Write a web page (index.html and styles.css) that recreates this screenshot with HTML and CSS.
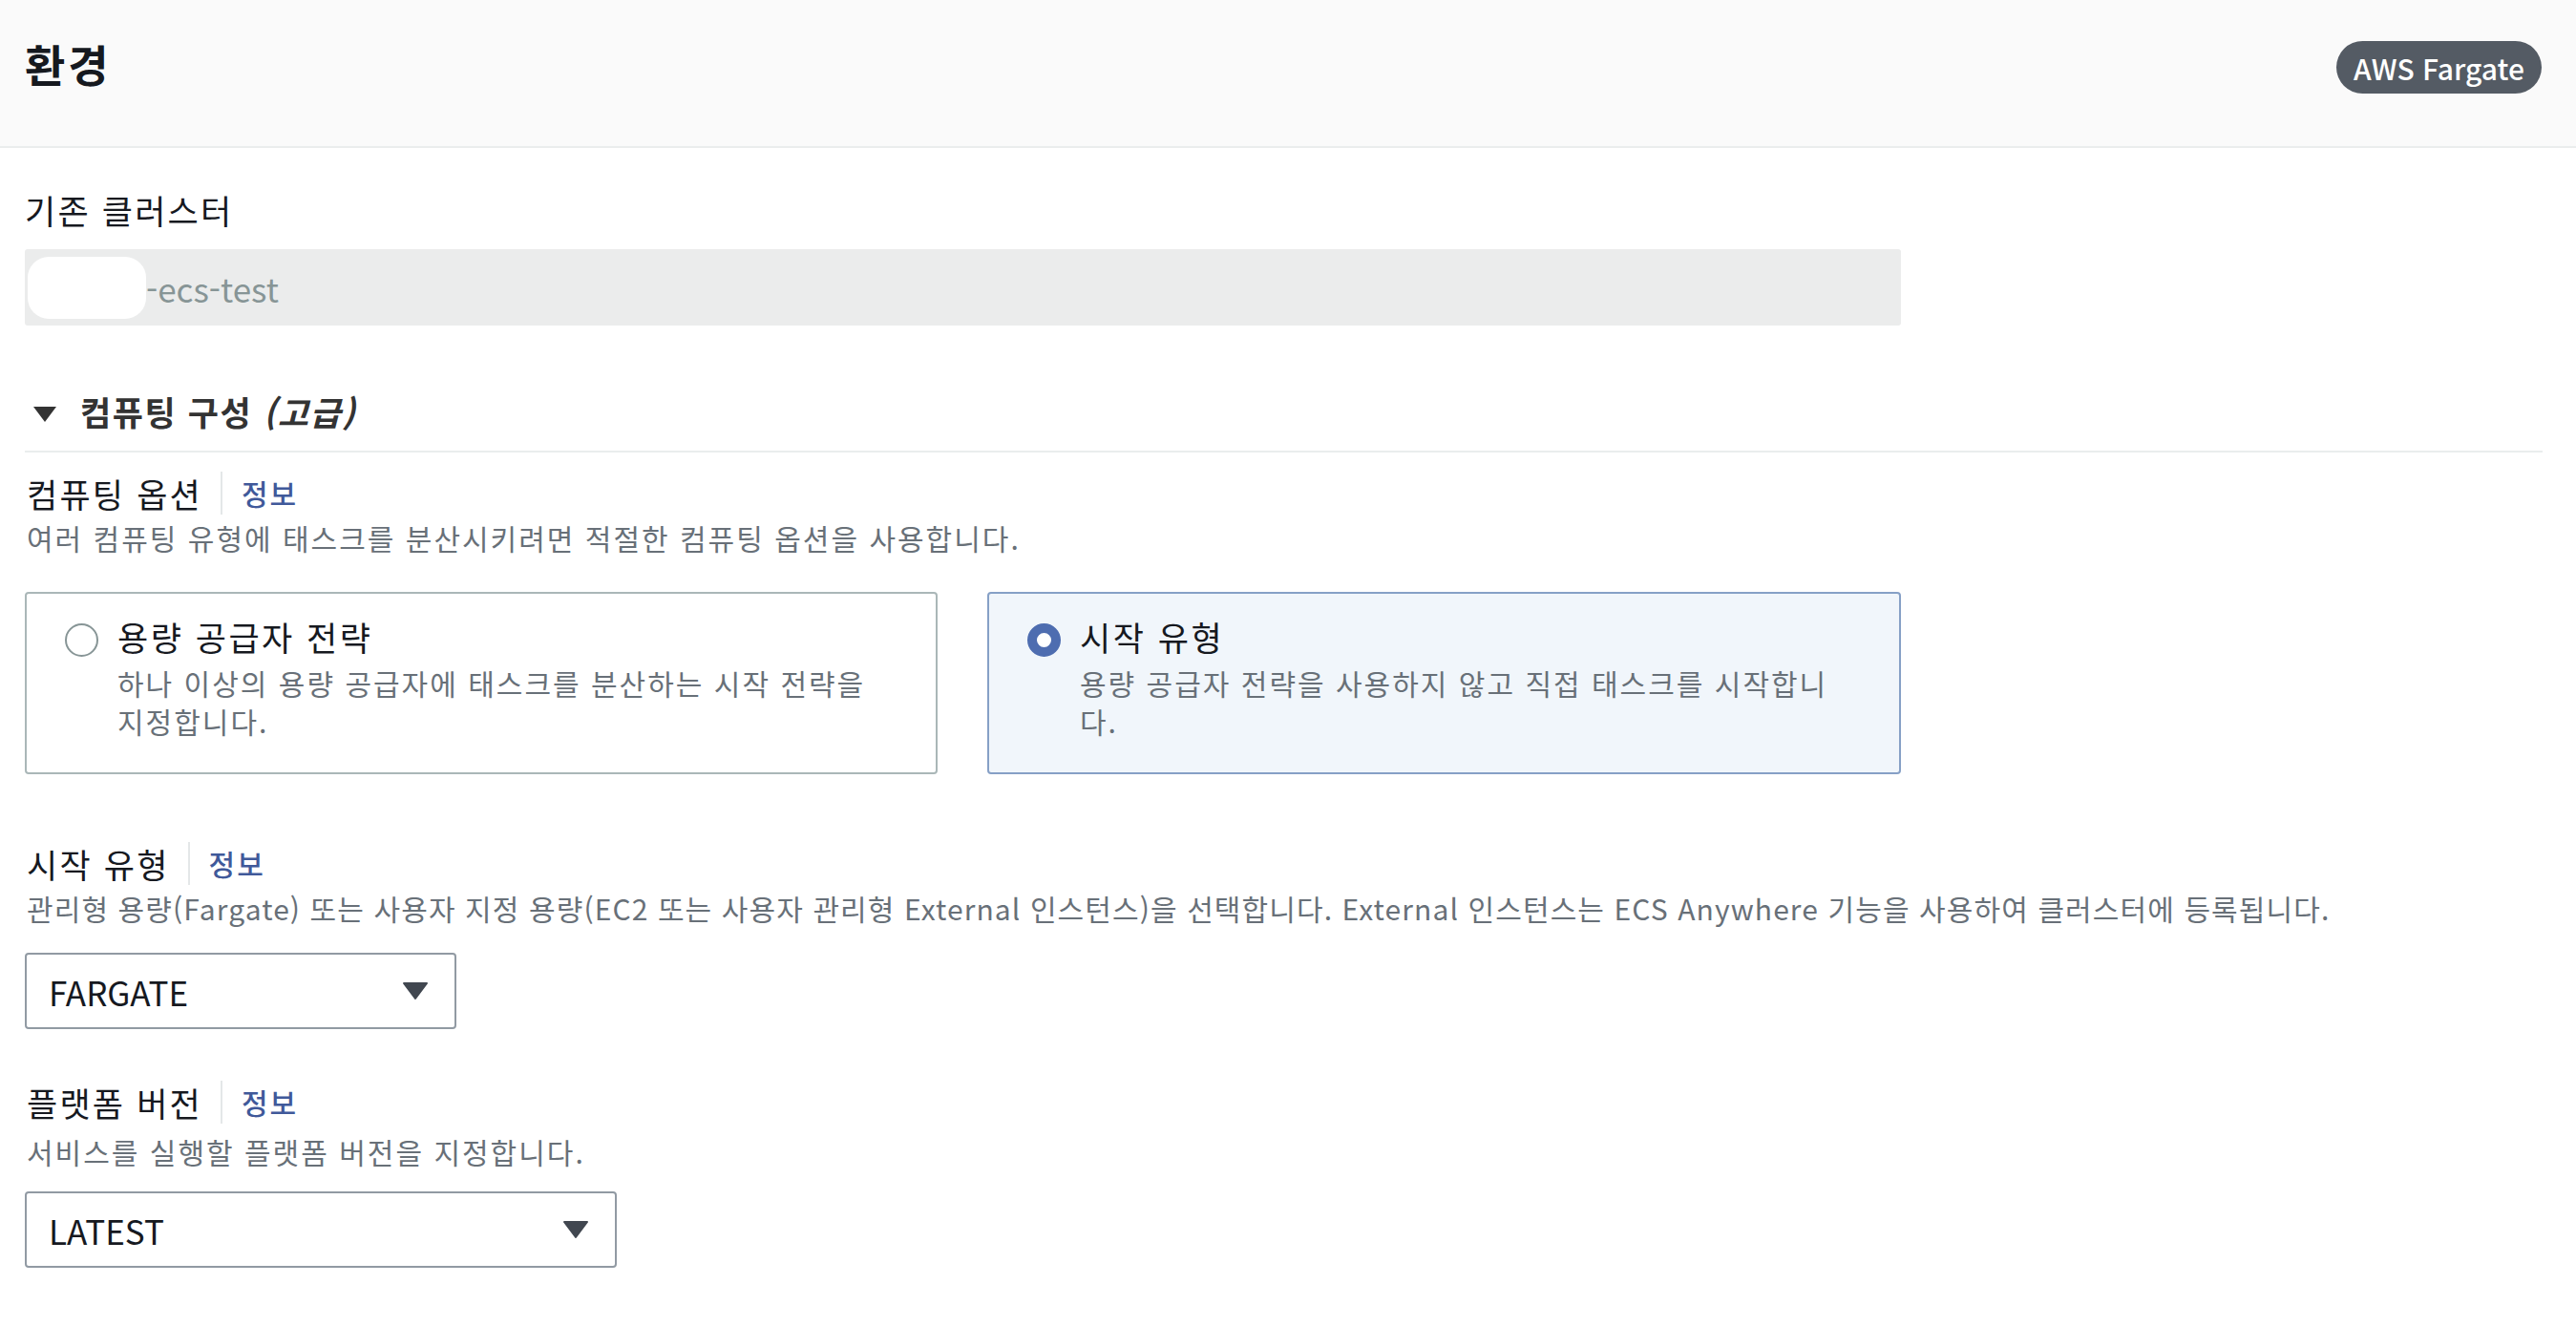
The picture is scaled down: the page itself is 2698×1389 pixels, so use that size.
FILE: index.html
```html
<!DOCTYPE html>
<html lang="ko">
<head>
<meta charset="utf-8">
<title>환경</title>
<link rel="stylesheet" href="styles.css">
</head>
<body>
<div class="page">
  <header class="header">
    <h1 class="title">환경</h1>
    <span class="badge">AWS Fargate</span>
  </header>
  <main class="content">
    <div class="field">
      <div class="label">기존 클러스터</div>
      <div class="readonly-input"><span class="redact"></span><span class="ro-text">-ecs-test</span></div>
    </div>

    <section class="expand">
      <div class="expand-header">
        <svg class="caret" viewBox="0 0 26 18" width="26" height="18"><polygon points="1,1 25,1 13,17" fill="#333"/></svg>
        <span class="expand-title">컴퓨팅 구성 <i>(고급)</i></span>
      </div>

      <div class="field-head first">
        <span class="label">컴퓨팅 옵션</span><span class="sep"></span><a class="info">정보</a>
      </div>
      <div class="desc">여러 컴퓨팅 유형에 태스크를 분산시키려면 적절한 컴퓨팅 옵션을 사용합니다.</div>

      <div class="tiles">
        <div class="tile">
          <span class="radio"></span>
          <div class="tile-text">
            <div class="tile-title">용량 공급자 전략</div>
            <div class="tile-desc">하나 이상의 용량 공급자에 태스크를 분산하는 시작 전략을 지정합니다.</div>
          </div>
        </div>
        <div class="tile selected">
          <span class="radio checked"></span>
          <div class="tile-text">
            <div class="tile-title">시작 유형</div>
            <div class="tile-desc">용량 공급자 전략을 사용하지 않고 직접 태스크를 시작합니다.</div>
          </div>
        </div>
      </div>

      <div class="field-head launch">
        <span class="label">시작 유형</span><span class="sep"></span><a class="info">정보</a>
      </div>
      <div class="desc desc-long">관리형 용량(Fargate) 또는 사용자 지정 용량(EC2 또는 사용자 관리형 External 인스턴스)을 선택합니다. External 인스턴스는 ECS Anywhere 기능을 사용하여 클러스터에 등록됩니다.</div>
      <div class="select select-launch">
        <span class="select-value">FARGATE</span>
        <svg class="select-arrow" viewBox="0 0 28 20" width="28" height="20"><polygon points="2,2 26,2 14,18" fill="#414750" stroke="#414750" stroke-width="2" stroke-linejoin="round"/></svg>
      </div>

      <div class="field-head platform">
        <span class="label">플랫폼 버전</span><span class="sep"></span><a class="info">정보</a>
      </div>
      <div class="desc desc-platform">서비스를 실행할 플랫폼 버전을 지정합니다.</div>
      <div class="select select-platform">
        <span class="select-value">LATEST</span>
        <svg class="select-arrow" viewBox="0 0 28 20" width="28" height="20"><polygon points="2,2 26,2 14,18" fill="#414750" stroke="#414750" stroke-width="2" stroke-linejoin="round"/></svg>
      </div>
    </section>
  </main>
</div>
</body>
</html>
```

FILE: styles.css
```css
* { box-sizing: border-box; }

html, body {
  margin: 0;
  padding: 0;
  background: #ffffff;
}

body {
  font-family: "Noto Sans CJK KR", "Noto Sans", sans-serif;
  color: #16191f;
}

.page {
  width: 100%;
}

.header {
  height: 155px;
  background: #fafafa;
  border-bottom: 2px solid #eaeded;
  display: flex;
  justify-content: space-between;
  align-items: flex-start;
  padding: 36px 36px 0 26px;
}

.title {
  margin: 0;
  font-size: 46px;
  line-height: 60px;
  font-weight: 700;
  letter-spacing: 3px;
  color: #16191f;
}

.badge {
  margin-top: 7px;
  height: 55px;
  width: 215px;
  border-radius: 28px;
  background: #545b64;
  color: #ffffff;
  font-size: 30px;
  font-weight: 500;
  display: flex;
  align-items: center;
  justify-content: center;
  line-height: 1;
}

.content {
  padding: 37px 35px 40px 26px;
}

.label {
  font-size: 35px;
  line-height: 55px;
  letter-spacing: 2.2px;
  color: #16191f;
}

.readonly-input {
  margin-top: 14px;
  width: 1965px;
  height: 80px;
  background: #ebecec;
  border-radius: 3px;
  display: flex;
  align-items: center;
  padding-left: 3px;
}

.redact {
  display: inline-block;
  width: 124px;
  height: 65px;
  background: #ffffff;
  border-radius: 22px;
}

.ro-text {
  font-size: 35px;
  color: #879596;
  line-height: 1;
}

.expand {
  margin-top: 62px;
}

.expand-header {
  display: flex;
  align-items: center;
  height: 55px;
  padding-left: 8px;
  margin-bottom: 14px;
}

.expand-header + .field-head {
  border-top: 2px solid #eaeded;
}

.caret {
  display: block;
  margin-top: 6px;
  margin-right: 24px;
}

.expand-title {
  font-size: 35px;
  font-weight: 700;
  letter-spacing: 1.6px;
  color: #333333;
  line-height: 55px;
}

.expand-title i {
  font-style: italic;
}

.field-head {
  display: flex;
  align-items: center;
  padding-left: 2px;
}

.field-head.first {
  padding-top: 15px;
}

.field-head .sep {
  width: 2px;
  height: 45px;
  background: #e4e7e8;
  margin: 0 20px 0 19px;
}

.info {
  font-size: 30px;
  font-weight: 500;
  letter-spacing: 2px;
  color: #40599a;
  line-height: 55px;
  cursor: pointer;
}

.desc {
  font-size: 30px;
  line-height: 40px;
  letter-spacing: 2px;
  color: #687078;
  margin-top: -1px;
  padding-left: 2px;
}

.desc-long {
  letter-spacing: 1.1px;
}

.desc-platform {
  margin-top: 4px;
}

.tiles {
  margin-top: 37px;
  width: 1965px;
  display: grid;
  grid-template-columns: 956px 957px;
  column-gap: 52px;
}

.tile {
  height: 191px;
  border: 2px solid #aab7b8;
  border-radius: 4px;
  background: #ffffff;
  display: flex;
  align-items: flex-start;
  padding: 22px 55px 0 40px;
}

.tile.selected {
  background: #f1f6fb;
  border-color: #86a0c6;
}

.radio {
  flex: none;
  width: 35px;
  height: 35px;
  border-radius: 50%;
  border: 2px solid #879596;
  background: #ffffff;
  margin-top: 9px;
  margin-right: 20px;
}

.radio.checked {
  border: 10px solid #4e6db0;
  background: #ffffff;
}

.tile-text {
  flex: 1;
  min-width: 0;
}

.tile-title {
  font-size: 35px;
  line-height: 46px;
  letter-spacing: 2.5px;
  color: #16191f;
}

.tile-desc {
  margin-top: 5px;
  font-size: 30px;
  line-height: 40px;
  letter-spacing: 2px;
  color: #687078;
  word-break: break-all;
}

.field-head.launch {
  margin-top: 66px;
}

.field-head.platform {
  margin-top: 49px;
}

.select {
  display: flex;
  align-items: center;
  justify-content: space-between;
  height: 80px;
  border: 2px solid #919aa3;
  border-radius: 4px;
  background: #ffffff;
  padding: 0 27px 0 23px;
}

.select-launch {
  width: 452px;
  margin-top: 27px;
}

.select-platform {
  width: 620px;
  margin-top: 22px;
}

.select-value {
  font-size: 35px;
  line-height: 1;
  color: #16191f;
}

.select-arrow {
  display: block;
}
```
